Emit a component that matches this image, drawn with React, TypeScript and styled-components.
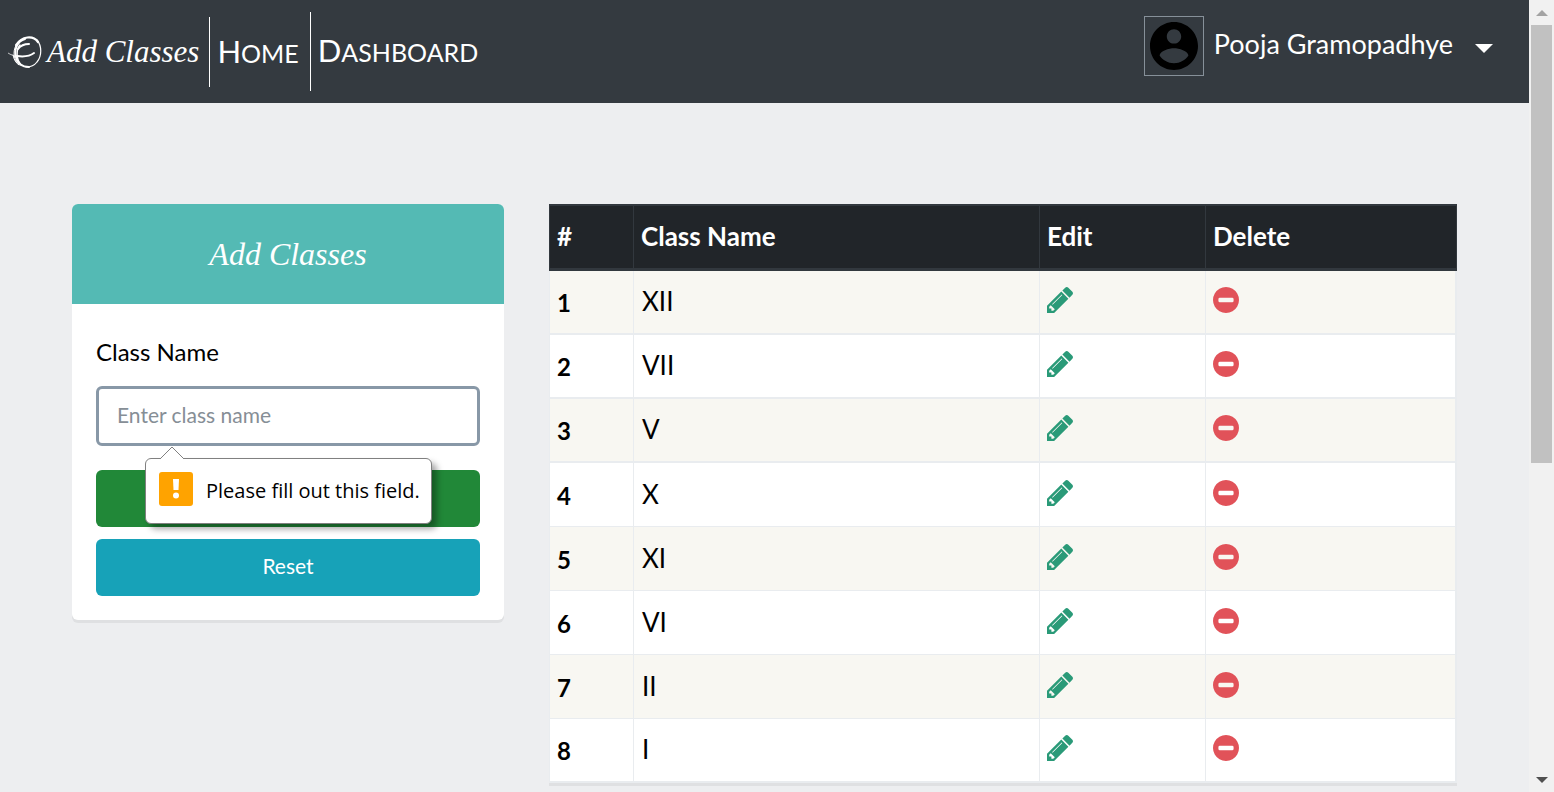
import React from "react";
import styled, { createGlobalStyle } from "styled-components";

const Global = createGlobalStyle`
  *, *::before, *::after { box-sizing: border-box; }
  html { scrollbar-width: none; }
  html::-webkit-scrollbar { display: none; }
  body {
    margin: 0;
    background: #edeef0;
    color: #000;
    font-family: Lato, "Open Sans", sans-serif;
    font-size: 24px;
  }
`;

const Shell = styled.div`
  display: flex;
  align-items: flex-start;
`;

const Page = styled.div`
  flex: 1;
  min-width: 0;
`;

const Navbar = styled.nav`
  display: flex;
  align-items: center;
  justify-content: space-between;
  height: 103px;
  padding: 0 36px 0 8px;
  background: #343a40;
`;

const NavGroup = styled.div`
  display: flex;
  align-items: center;
`;

const Brand = styled.a`
  display: flex;
  align-items: center;
  gap: 4px;
  height: 70px;
  padding-right: 10px;
  color: #fff;
  font: italic 31px/40px "Liberation Serif", serif;
  text-decoration: none;
  white-space: nowrap;
`;

const NavLink = styled.a<{ $tall?: boolean }>`
  display: block;
  height: ${(p) => (p.$tall ? 79 : 70)}px;
  padding: 0 11px 0 7px;
  border-left: 1px solid #fff;
  color: #fff;
  font-size: 25px;
  line-height: ${(p) => (p.$tall ? 77 : 68)}px;
  text-decoration: none;
  text-transform: uppercase;
  &::first-letter { font-size: 31px; }
`;

const UserMenu = styled.button`
  display: flex;
  align-items: center;
  gap: 10px;
  padding: 0 0 12px;
  border: 0;
  background: none;
  color: #fff;
  font: 27px/32px Lato, sans-serif;
  white-space: nowrap;
`;

const UserName = styled.span`
  padding-bottom: 4px;
`;

const Avatar = styled.span`
  display: flex;
  align-items: center;
  justify-content: center;
  width: 60px;
  height: 60px;
  border: 1px solid #869099;
`;

const Caret = styled.span`
  margin: 5px 0 0 12px;
  border: 9px solid transparent;
  border-top-color: #fff;
  border-bottom: 0;
`;

const Content = styled.main`
  display: grid;
  grid-template-columns: 432fr 908fr;
  gap: 45px;
  align-items: start;
  padding: 101px 72px 48px;
`;

const Card = styled.section`
  border-radius: 6px;
  background: #fff;
  box-shadow: 0 3px 0 #dfe0e2;
`;

const CardTitle = styled.h1`
  margin: 0;
  padding: 30px 24px;
  border-radius: 6px 6px 0 0;
  background: #54bab4;
  color: #fff;
  font: italic 32px/40px "Liberation Serif", serif;
  text-align: center;
`;

const Form = styled.form`
  padding: 32px 24px 24px;
`;

const Field = styled.div`
  position: relative;
  margin-bottom: 24px;
`;

const Label = styled.label`
  display: block;
  margin-bottom: 18px;
  font-size: 24px;
  line-height: 32px;
`;

const TextInput = styled.input`
  display: block;
  width: 100%;
  height: 60px;
  padding: 0 18px 4px;
  border: 3px solid #8898a7;
  border-radius: 6px;
  outline: 0;
  background: #fff;
  font: 21px/32px Lato, sans-serif;
  &::placeholder { color: #868e96; opacity: 1; }
`;

const Hint = styled.div`
  position: absolute;
  z-index: 1;
  top: calc(100% + 12px);
  left: 49px;
  display: flex;
  align-items: center;
  gap: 13px;
  height: 66px;
  padding: 0 11px 4px 13px;
  border: 1px solid #808080;
  border-radius: 6px;
  background: #fff;
  box-shadow: 5px 5px 6px rgba(0, 0, 0, 0.35);
  font: 20px/28px "Open Sans", sans-serif;
  white-space: nowrap;
`;

const HintText = styled.span`
  padding-top: 4px;
`;

const HintArrow = styled.svg`
  position: absolute;
  top: -13px;
  left: 13px;
`;

const FormButton = styled.button<{ $color: string }>`
  display: block;
  width: 100%;
  height: 57px;
  padding: 0 0 3px;
  border: 0;
  border-radius: 6px;
  background: ${(p) => p.$color};
  color: #fff;
  font: 21px/32px Lato, sans-serif;
  & + & { margin-top: 12px; }
`;

const ClassTable = styled.table`
  width: 100%;
  border-collapse: separate;
  border-spacing: 0;
  table-layout: fixed;
  background: #fff;
  box-shadow: 0 3px 0 #dfe0e2;
`;

const HeadCell = styled.th<{ $width?: string }>`
  width: ${(p) => p.$width ?? "auto"};
  height: 67px;
  padding: 0 7px 2px;
  border: solid #32383e;
  border-width: 2px 0 3px 1px;
  background: #212529;
  color: #fff;
  font-size: 26px;
  font-weight: 700;
  text-align: left;
  &:last-child { border-right-width: 1px; }
`;

const Row = styled.tr`
  &:nth-child(odd) { background: #f8f7f2; }
  &:nth-child(-n + 3) > *, &:last-child > * { border-bottom-width: 2px; }
`;

const Cell = styled.td`
  height: 64px;
  padding: 0 8px 2px;
  border: solid #e9ecef;
  border-width: 0 0 1px 1px;
  font-size: 26px;
  line-height: 32px;
  text-align: left;
  &:last-child { border-right-width: 2px; }
`;

const IndexCell = styled(Cell)`
  padding: 2px 7px 0;
  font-size: 24px;
  font-weight: 700;
`;

const IconCell = styled(Cell)`
  padding: 0 7px 4px;
`;

const IconButton = styled.button<{ $color: string }>`
  display: block;
  padding: 0;
  border: 0;
  background: none;
  color: ${(p) => p.$color};
  line-height: 0;
`;

const Rail = styled.div`
  position: sticky;
  top: 0;
  display: flex;
  flex-direction: column;
  width: 25px;
  height: 100vh;
  padding: 0 2px;
  background: #f1f1f1;
`;

const RailEnd = styled.div`
  display: flex;
  align-items: center;
  justify-content: center;
  height: 25px;
`;

const RailTrack = styled.div`
  flex: 1;
`;

const RailThumb = styled.div`
  height: 59%;
  background: #c1c1c1;
`;

const Logo = () => (
  <svg width="35" height="34" viewBox="0 0 35 34" fill="none" stroke="#fff" strokeLinecap="round" aria-hidden="true">
    <path d="M8 10C14 1 25 0 30 7" strokeWidth="2.2" />
    <path d="M29 5C34 11 34 21 29 27C26 31 22 32 18 32" strokeWidth="1.2" />
    <path d="M17 4C9 6 6 15 8 22C9 28 14 32 21 32" strokeWidth="2" />
    <path d="M12 10C8 15 8 24 13 30" strokeWidth="1.4" />
    <path d="M9 9C5 14 5 22 9 28M5 20C6 25 8 28 11 30" strokeWidth="1" />
    <path d="M10 14C13 10 17 9 21 9" strokeWidth="2" />
    <path d="M9 21C16 22 22 21 26 18" strokeWidth="2" />
    <path d="M0 18C3 20 6 21 9 21" strokeWidth="1" opacity=".7" />
  </svg>
);

const Person = () => (
  <svg width="48" height="48" viewBox="2 2 20 20" fill="#000" aria-hidden="true">
    <path d="M12 2C6.48 2 2 6.48 2 12s4.48 10 10 10 10-4.48 10-10S17.52 2 12 2zm0 3c1.66 0 3 1.34 3 3s-1.34 3-3 3-3-1.34-3-3 1.34-3 3-3zm0 14.2c-2.5 0-4.71-1.28-6-3.22.03-1.99 4-3.08 6-3.08 1.99 0 5.97 1.09 6 3.08-1.29 1.94-3.5 3.22-6 3.22z" />
  </svg>
);

const Pencil = () => (
  <svg width="26" height="26" viewBox="128 148 1516 1516" fill="currentColor" aria-hidden="true">
    <path d="M491 1536l91-91-235-235-91 91v107h128v128h107zm523-928q0-22-22-22-10 0-17 7l-542 542q-7 7-7 17 0 22 22 22 10 0 17-7l542-542q7-7 7-17zm-54-192l416 416-832 832h-416v-416zm683 96q0 53-37 90l-166 166-416-416 166-165q36-38 90-38 53 0 91 38l235 234q37 39 37 91z" />
  </svg>
);

const MinusCircle = () => (
  <svg width="26" height="26" viewBox="128 128 1536 1536" fill="currentColor" aria-hidden="true">
    <path d="M1344 960v-128q0-26-19-45t-45-19h-768q-26 0-45 19t-19 45v128q0 26 19 45t45 19h768q26 0 45-19t19-45zm320-64q0 209-103 385.5t-279.5 279.5-385.5 103-385.5-103-279.5-279.5-103-385.5 103-385.5 279.5-279.5 385.5-103 385.5 103 279.5 279.5 103 385.5z" />
  </svg>
);

const Warning = () => (
  <svg width="34" height="34" viewBox="0 0 34 34" aria-hidden="true">
    <rect width="34" height="34" rx="3" fill="#ffa300" />
    <path d="M14 7h6l-.5 11h-5z" fill="#fff" />
    <circle cx="17" cy="23.5" r="3" fill="#fff" />
  </svg>
);

const Arrow = ({ up }: { up?: boolean }) => (
  <svg width="12" height="6" viewBox="0 0 12 6" aria-hidden="true">
    <path d={up ? "M0 6L6 0L12 6Z" : "M0 0L6 6L12 0Z"} fill={up ? "#a3a3a3" : "#505050"} />
  </svg>
);

const classes = ["XII", "VII", "V", "X", "XI", "VI", "II", "I"];

export default function App() {
  return (
    <>
      <Global />
      <Shell>
        <Page>
          <Navbar>
            <NavGroup>
              <Brand href="#"><Logo />Add Classes</Brand>
              <NavLink href="#">Home</NavLink>
              <NavLink href="#" $tall>Dashboard</NavLink>
            </NavGroup>
            <UserMenu type="button">
              <Avatar><Person /></Avatar>
              <UserName>Pooja Gramopadhye</UserName>
              <Caret />
            </UserMenu>
          </Navbar>
          <Content>
            <Card>
              <CardTitle>Add Classes</CardTitle>
              <Form>
                <Field>
                  <Label htmlFor="class-name">Class Name</Label>
                  <TextInput id="class-name" placeholder="Enter class name" required />
                  <Hint role="alert">
                    <HintArrow width="26" height="14" viewBox="0 0 26 14">
                      <path d="M1 14V13L13 1L25 13V14Z" fill="#fff" />
                      <path d="M1 13L13 1L25 13" fill="none" stroke="#808080" />
                    </HintArrow>
                    <Warning />
                    <HintText>Please fill out this field.</HintText>
                  </Hint>
                </Field>
                <FormButton type="submit" $color="#218838" aria-label="Add" />
                <FormButton type="reset" $color="#17a2b8">Reset</FormButton>
              </Form>
            </Card>
            <ClassTable>
              <thead>
                <tr>
                  <HeadCell scope="col" $width="84px">#</HeadCell>
                  <HeadCell scope="col">Class Name</HeadCell>
                  <HeadCell scope="col" $width="166px">Edit</HeadCell>
                  <HeadCell scope="col" $width="252px">Delete</HeadCell>
                </tr>
              </thead>
              <tbody>
                {classes.map((name, i) => (
                  <Row key={name}>
                    <IndexCell as="th" scope="row">{i + 1}</IndexCell>
                    <Cell>{name}</Cell>
                    <IconCell>
                      <IconButton type="button" $color="#2a9a78" aria-label={`Edit ${name}`}><Pencil /></IconButton>
                    </IconCell>
                    <IconCell>
                      <IconButton type="button" $color="#e15259" aria-label={`Delete ${name}`}><MinusCircle /></IconButton>
                    </IconCell>
                  </Row>
                ))}
              </tbody>
            </ClassTable>
          </Content>
        </Page>
        <Rail aria-hidden="true">
          <RailEnd><Arrow up /></RailEnd>
          <RailTrack><RailThumb /></RailTrack>
          <RailEnd><Arrow /></RailEnd>
        </Rail>
      </Shell>
    </>
  );
}
